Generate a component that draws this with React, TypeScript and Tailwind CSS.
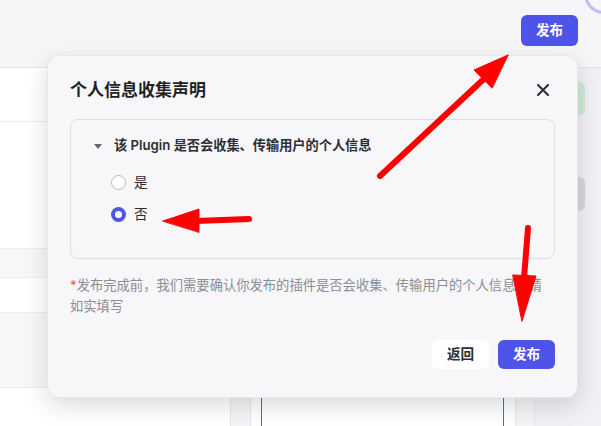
import React from 'react'

const font = { fontFamily: '"Inter", "Noto Sans CJK SC", sans-serif' }

const Radio = ({ checked, label }: { checked: boolean; label: string }) => (
    <div className="flex items-center h-[20px]">
        {checked ? (
            <div className="w-[15px] h-[15px] rounded-full border-[4px] border-[#4e54e8] bg-white" />
        ) : (
            <div className="w-[15px] h-[15px] rounded-full border border-[#b9b9c2] bg-white" />
        )}
        <span className="ml-[8px] text-[13.6px] text-[#2b2b33]">{label}</span>
    </div>
)

const Arrows = () => (
    <svg className="absolute inset-0 pointer-events-none" width="601" height="426" viewBox="0 0 601 426">
        <g fill="#ff0000" stroke="#ff0000" strokeLinecap="round" strokeLinejoin="round">
            <line x1="380" y1="176" x2="486" y2="77" strokeWidth="6" />
            <polygon points="508,55 474,70 492,88" strokeWidth="1" />
            <line x1="249" y1="219" x2="196" y2="221" strokeWidth="6" />
            <polygon points="163,221 199,209 199,232" strokeWidth="1" />
            <line x1="528" y1="228" x2="524" y2="278" strokeWidth="6" />
            <polygon points="513,275 536,276 522,321" strokeWidth="1" />
        </g>
    </svg>
)

export default function App() {
    return (
        <div className="relative w-[601px] h-[426px] overflow-hidden bg-[#f0f0f5]" style={font}>
            {/* header */}
            <div className="h-[68px] bg-[#f6f6f8] border-b border-[#e4e4ea] flex justify-end items-start pt-[15px] pr-[23px]">
                <button className="w-[57px] h-[31px] rounded-[6px] bg-[#4e54e8] text-white text-[13.6px] font-bold">
                    发布
                </button>
            </div>
            <div className="absolute -top-[26px] left-[584px] w-[40px] h-[40px] rounded-full border-[3px] border-[#cbb9f3]" />

            {/* body */}
            <div className="flex h-[358px]">
                <div className="w-[231px] bg-white border-r border-[#e6e6ea] flex flex-col">
                    <div className="h-[54px] border-b border-[#ececef]" />
                    <div className="h-[127px] border-b border-[#ececef]" />
                    <div className="h-[29px] bg-[#f7f7f8] border-b border-[#ececef]" />
                    <div className="h-[35px] border-b border-[#ececef]" />
                    <div className="h-[75px] bg-[#f7f7f8] border-b border-[#ececef]" />
                    <div className="flex-1" />
                </div>
                <div className="w-[20px] bg-[#f5f5f7] border-r border-[#e6e6ea]" />
                <div className="w-[264px] bg-white flex pl-[10px] pr-[11px]">
                    <div className="flex-1 border-x border-[#1a7fe0]" />
                </div>
                <div className="w-[20px] bg-[#f5f5f7] border-l border-r border-[#e6e6ea]" />
                <div className="flex-1 flex flex-col pl-[34px] pt-[14px]">
                    <div className="w-[16px] h-[34px] rounded-r-[6px] bg-[#cfe9d6]" />
                    <div className="w-[16px] h-[34px] mt-[61px] rounded-r-[6px] bg-[#d6d6dc]" />
                </div>
            </div>

            {/* modal */}
            <div className="absolute left-[47px] top-[55px] w-[531px] h-[343px] rounded-[12px] bg-[#f7f7f9] border border-[#e8e8ec] shadow-[0_8px_24px_rgba(0,0,0,0.14)] flex flex-col px-[22px] pt-[23px] pb-[28px]">
                <div className="flex items-center justify-between h-[24px]">
                    <span className="text-[17px] font-bold text-[#1f1f26]">个人信息收集声明</span>
                    <svg width="12" height="12" viewBox="0 0 12 12" className="mr-[6px] -mt-[3px]">
                        <path d="M1 1L11 11M11 1L1 11" stroke="#2e2e35" strokeWidth="2" strokeLinecap="round" />
                    </svg>
                </div>
                <div className="mt-[16px] h-[140px] rounded-[8px] border border-[#dedee3] pl-[23px] pt-[16px]">
                    <div className="flex items-center h-[20px]">
                        <svg width="8" height="5" viewBox="0 0 8 5" className="mr-[12px]">
                            <path d="M0 0H8L4 5Z" fill="#666670" />
                        </svg>
                        <span className="text-[13.2px] font-semibold text-[#2e2e36]">该 Plugin 是否会收集、传输用户的个人信息</span>
                    </div>
                    <div className="mt-[16px] pl-[17px] flex flex-col gap-[12px]">
                        <Radio checked={false} label="是" />
                        <Radio checked={true} label="否" />
                    </div>
                </div>
                <p className="mt-[16px] text-[13.3px] leading-[21px] text-[#8c8c94]">
                    <span className="text-[#f5574a]">*</span>发布完成前，我们需要确认你发布的插件是否会收集、传输用户的个人信息，请如实填写
                </p>
                <div className="mt-auto flex justify-end gap-[9px]">
                    <button className="w-[57px] h-[29px] rounded-[6px] bg-white text-[13.6px] font-bold text-[#2e2e36]">
                        返回
                    </button>
                    <button className="w-[57px] h-[29px] rounded-[6px] bg-[#4e54e8] text-[13.6px] font-bold text-white">
                        发布
                    </button>
                </div>
            </div>

            <Arrows />
        </div>
    )
}
